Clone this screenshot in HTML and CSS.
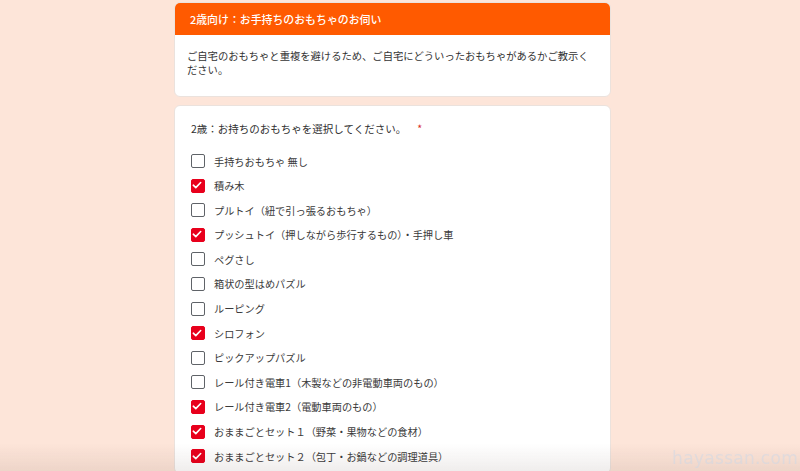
FILE: index.html
```html
<!DOCTYPE html>
<html lang="ja">
<head>
<meta charset="utf-8">
<title>2歳向け：お手持ちのおもちゃのお伺い</title>
<link rel="stylesheet" href="styles.css">
</head>
<body>
<main class="page">
  <section class="card intro">
    <div class="card-head">2歳向け：お手持ちのおもちゃのお伺い</div>
    <div class="card-body">ご自宅のおもちゃと重複を避けるため、ご自宅にどういったおもちゃがあるかご教示ください。</div>
  </section>
  <section class="card question">
    <div class="q-title">2歳：お持ちのおもちゃを選択してください。<span class="req">*</span></div>
    <ul class="options">
      <li class="opt"><span class="box"></span><span>手持ちおもちゃ 無し</span></li>
      <li class="opt"><span class="box on"><svg viewBox="0 0 14 14"><path d="M3.3 7.2l2.5 2.4 4.9-5.1"/></svg></span><span>積み木</span></li>
      <li class="opt"><span class="box"></span><span>プルトイ（紐で引っ張るおもちゃ）</span></li>
      <li class="opt"><span class="box on"><svg viewBox="0 0 14 14"><path d="M3.3 7.2l2.5 2.4 4.9-5.1"/></svg></span><span>プッシュトイ（押しながら歩行するもの）・手押し車</span></li>
      <li class="opt"><span class="box"></span><span>ペグさし</span></li>
      <li class="opt"><span class="box"></span><span>箱状の型はめパズル</span></li>
      <li class="opt"><span class="box"></span><span>ルーピング</span></li>
      <li class="opt"><span class="box on"><svg viewBox="0 0 14 14"><path d="M3.3 7.2l2.5 2.4 4.9-5.1"/></svg></span><span>シロフォン</span></li>
      <li class="opt"><span class="box"></span><span>ピックアップパズル</span></li>
      <li class="opt"><span class="box"></span><span>レール付き電車1（木製などの非電動車両のもの）</span></li>
      <li class="opt"><span class="box on"><svg viewBox="0 0 14 14"><path d="M3.3 7.2l2.5 2.4 4.9-5.1"/></svg></span><span>レール付き電車2（電動車両のもの）</span></li>
      <li class="opt"><span class="box on"><svg viewBox="0 0 14 14"><path d="M3.3 7.2l2.5 2.4 4.9-5.1"/></svg></span><span>おままごとセット１（野菜・果物などの食材）</span></li>
      <li class="opt"><span class="box on"><svg viewBox="0 0 14 14"><path d="M3.3 7.2l2.5 2.4 4.9-5.1"/></svg></span><span>おままごとセット２（包丁・お鍋などの調理道具）</span></li>
    </ul>
  </section>
</main>
<div class="shade"></div>
<div class="watermark">hayassan.com</div>
</body>
</html>
```
FILE: styles.css
```css
html, body {
  margin: 0;
  padding: 0;
  height: 100%;
  overflow: hidden;
}
body {
  background: #fde5d9;
  font-family: "Noto Sans CJK JP", "Noto Sans", sans-serif;
  color: #303030;
}
.page {
  width: 437px;
  margin-left: 174px;
  padding-top: 2px;
  display: flex;
  flex-direction: column;
  gap: 8px;
}
.card {
  background: #fff;
  border: 1px solid #ebe2dd;
  border-radius: 6px;
  overflow: hidden;
}
.card-head {
  background: #ff5a00;
  color: #fff;
  font-size: 10.9px;
  font-weight: 500;
  height: 32px;
  line-height: 32px;
  padding-left: 15px;
}
.card-body {
  font-size: 10.3px;
  line-height: 14px;
  padding: 14px 18px 19px 12px;
  color: #333;
}
.question {
  padding: 15px 16px 0 16px;
  height: 352px;
}
.q-title {
  font-size: 10.5px;
  line-height: 16px;
  color: #303030;
}
.req {
  color: #d93025;
  margin-left: 11px;
}
.options {
  list-style: none;
  margin: 17px 0 0 0;
  padding: 0;
  display: flex;
  flex-direction: column;
  gap: 10.6px;
}
.opt {
  display: flex;
  align-items: center;
  gap: 9px;
  height: 14px;
  font-size: 10.2px;
  color: #3a3a3a;
}
.box {
  width: 14px;
  height: 14px;
  box-sizing: border-box;
  border: 1.6px solid #5f6368;
  border-radius: 2px;
  flex: none;
  display: flex;
}
.box.on {
  background: #e8001c;
  border-color: #e8001c;
}
.box svg {
  margin: -1.6px;
  width: 14px;
  height: 14px;
}
.box svg path {
  fill: none;
  stroke: #fff;
  stroke-width: 1.6;
  stroke-linecap: round;
  stroke-linejoin: round;
}
.shade {
  position: fixed;
  left: 0;
  right: 0;
  bottom: 0;
  height: 28px;
  background: linear-gradient(to bottom, rgba(0,0,0,0), rgba(60,30,20,0.08));
  pointer-events: none;
}
.watermark {
  position: fixed;
  right: 2px;
  bottom: 3px;
  font-family: "DejaVu Sans", sans-serif;
  font-size: 17px;
  letter-spacing: 0.3px;
  color: rgba(200, 215, 232, 0.45);
}
```
